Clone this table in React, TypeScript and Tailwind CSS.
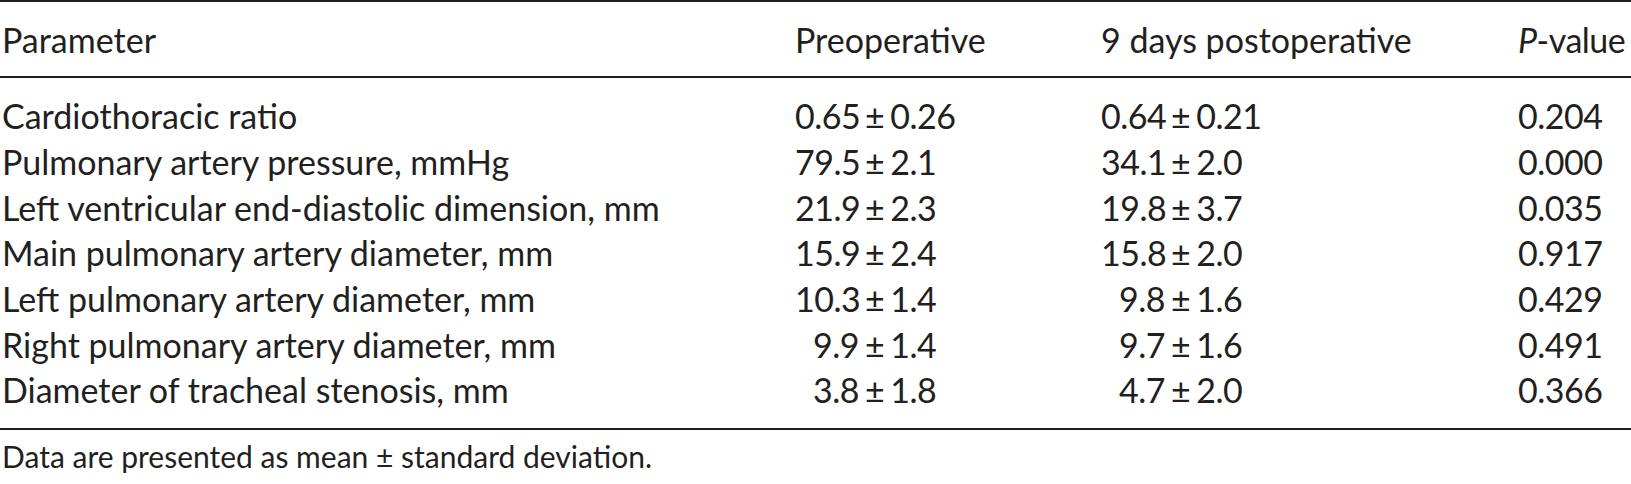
const rows: [string, [string, string], [string, string], string][] = [
  ["Cardiothoracic ratio", ["0.65", "0.26"], ["0.64", "0.21"], "0.204"],
  ["Pulmonary artery pressure, mmHg", ["79.5", "2.1"], ["34.1", "2.0"], "0.000"],
  ["Left ventricular end-diastolic dimension, mm", ["21.9", "2.3"], ["19.8", "3.7"], "0.035"],
  ["Main pulmonary artery diameter, mm", ["15.9", "2.4"], ["15.8", "2.0"], "0.917"],
  ["Left pulmonary artery diameter, mm", ["10.3", "1.4"], ["9.8", "1.6"], "0.429"],
  ["Right pulmonary artery diameter, mm", ["9.9", "1.4"], ["9.7", "1.6"], "0.491"],
  ["Diameter of tracheal stenosis, mm", ["3.8", "1.8"], ["4.7", "2.0"], "0.366"],
];

function MeanSd({ value }: { value: [string, string] }) {
  return (
    <div className="flex items-baseline tracking-[-0.5px]">
      <span className="w-[64px] text-right">{value[0]}</span>
      <span className="mx-[6px]">±</span>
      <span>{value[1]}</span>
    </div>
  );
}

export default function App() {
  return (
    <div className="h-[484px] w-[1631px] overflow-hidden bg-white font-['Lato','Open_Sans',sans-serif] text-[34px] text-[#231f20]">
      <div className="border-y-2 border-[#231f20]">
        <div className="flex h-[74px] items-center">
          <div className="w-[795px] shrink-0 pl-[2px]">Parameter</div>
          <div className="w-[306px] shrink-0">Preoperative</div>
          <div className="w-[417px] shrink-0">9 days postoperative</div>
          <div className="whitespace-nowrap tracking-[-0.5px]">
            <span className="italic">P</span>-value
          </div>
        </div>
      </div>
      <div className="border-b-2 border-[#231f20] pt-[15px] pb-[15px]">
        {rows.map(([name, pre, post, p]) => (
          <div key={name} className="flex h-[45.7px] items-center leading-[45px]">
            <div className="w-[795px] shrink-0 pl-[2px]">{name}</div>
            <div className="w-[306px] shrink-0">
              <MeanSd value={pre} />
            </div>
            <div className="w-[417px] shrink-0">
              <MeanSd value={post} />
            </div>
            <div className="tracking-[-0.5px]">{p}</div>
          </div>
        ))}
      </div>
      <div className="flex h-[54px] items-center pl-[2px] text-[30px] leading-[45px]">
        Data are presented as mean ± standard deviation.
      </div>
    </div>
  );
}
